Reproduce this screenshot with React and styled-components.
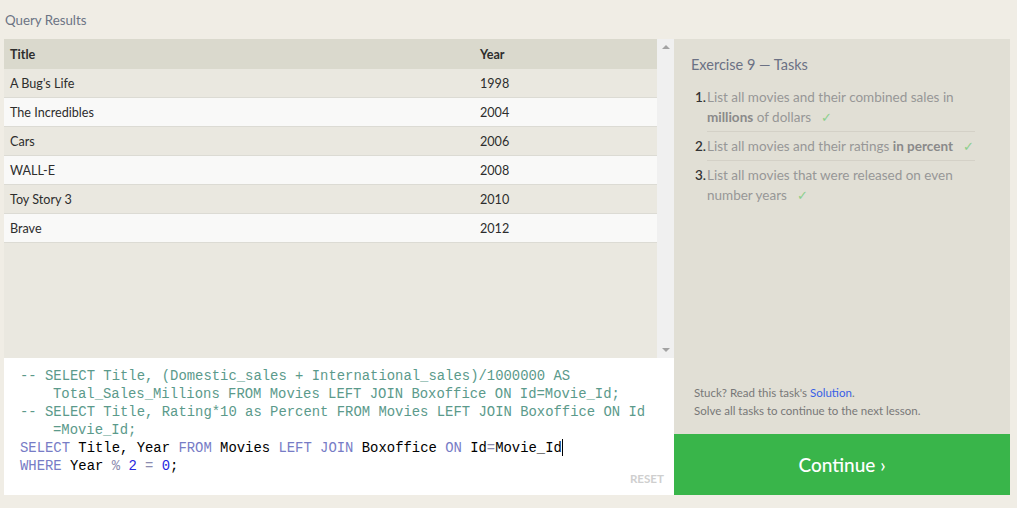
import React from "react";
import styled, { createGlobalStyle } from "styled-components";

const GlobalStyle = createGlobalStyle`
    html, body {
        margin: 0;
        padding: 0;
        background: #f0ede5;
    }
    body {
        font-family: Lato, "Open Sans", sans-serif;
        width: 1017px;
        height: 508px;
        overflow: hidden;
    }
`;

const Page = styled.div`
    padding: 0 7px 0 4px;
`;

const Heading = styled.div`
    height: 39px;
    line-height: 40px;
    padding-left: 1px;
    font-size: 13.3px;
    color: #6c7484;
`;

const Main = styled.div`
    display: flex;
    height: 456px;
`;

const LeftPane = styled.div`
    width: 670px;
    display: flex;
    flex-direction: column;
`;

const ResultsArea = styled.div`
    height: 319px;
    flex-shrink: 0;
    display: flex;
    background: #eae8e0;
`;

const Table = styled.div`
    flex: 1;
`;

const Row = styled.div`
    display: grid;
    grid-template-columns: 470px 1fr;
    height: ${(p) => (p.$head ? 30 : 29)}px;
    box-sizing: border-box;
    align-items: center;
    padding-left: 6px;
    font-size: 12.6px;
    color: #2d2d2d;
    font-weight: ${(p) => (p.$head ? 700 : 400)};
    background: ${(p) => (p.$head ? "#dad9cd" : p.$even ? "#f9f9f8" : "#eae8e0")};
    border-bottom: ${(p) => (p.$head ? "none" : "1px solid #dcdbd4")};
`;

const Scrollbar = styled.div`
    width: 17px;
    background: #f0f0f0;
    display: flex;
    flex-direction: column;
    justify-content: space-between;
    align-items: center;
    padding: 6px 0;
    box-sizing: border-box;
`;

const Arrow = styled.div`
    width: 0;
    height: 0;
    border-left: 4px solid transparent;
    border-right: 4px solid transparent;
    ${(p) => (p.$down ? "border-top: 4px solid #a3a3a3;" : "border-bottom: 4px solid #a3a3a3;")}
`;

const Editor = styled.div`
    height: 137px;
    box-sizing: border-box;
    overflow: hidden;
    background: #ffffff;
    display: flex;
    flex-direction: column;
    padding: 9px 10px 0 16px;
`;

const Code = styled.pre`
    margin: 0;
    font-family: "Liberation Mono", "DejaVu Sans Mono", monospace;
    font-size: 13.9px;
    line-height: 18px;
    color: #000;
`;

const Line = styled.div`
    white-space: pre;
    padding-left: ${(p) => (p.$wrap ? 33 : 0)}px;
`;

const Comment = styled.span`
    color: #5b9a8b;
`;

const Kw = styled.span`
    color: #777cc6;
`;

const Op = styled.span`
    color: #8c8cb0;
`;

const Num = styled.span`
    color: #2727e0;
`;

const Cursor = styled.span`
    display: inline-block;
    width: 1px;
    height: 17px;
    background: #000;
    vertical-align: -4px;
`;

const EditorFooter = styled.div`
    display: flex;
    justify-content: flex-end;
    margin-top: -3px;
    line-height: 14px;
`;

const ResetButton = styled.span`
    font-size: 11.6px;
    font-weight: 700;
    color: #cfcfcf;
`;

const RightPane = styled.div`
    width: 336px;
    display: flex;
    flex-direction: column;
`;

const TasksPanel = styled.div`
    flex: 1;
    background: #e1dfd5;
    padding: 16px 35px 0 17px;
    display: flex;
    flex-direction: column;
`;

const TasksTitle = styled.div`
    font-size: 14.5px;
    color: #6b7184;
    line-height: 20px;
    margin-bottom: 8px;
`;

const TaskList = styled.div`
    display: flex;
    flex-direction: column;
`;

const Task = styled.div`
    display: flex;
`;

const TaskNum = styled.div`
    width: 16px;
    text-align: right;
    padding: 4px 1px 0 0;
    box-sizing: border-box;
    font-size: 13.5px;
    line-height: 20px;
    color: #333;
    font-weight: 600;
`;

const TaskBody = styled.div`
    flex: 1;
    padding: 4px 0;
    font-size: 13.5px;
    line-height: 20px;
    color: #979797;
    border-bottom: ${(p) => (p.$last ? "none" : "1px solid #d4d1c7")};
`;

const Strong = styled.b`
    font-weight: 700;
    color: #8a8a8a;
`;

const Check = styled.span`
    display: inline-block;
    line-height: 14px;
    font-size: 13px;
    color: #8ccf8c;
    margin-left: 10px;
`;

const Spacer = styled.div`
    flex: 1;
`;

const Hint = styled.div`
    font-size: 11.5px;
    line-height: 18px;
    color: #787878;
    padding: 0 0 14px 3px;
`;

const SolutionLink = styled.a`
    color: #3860e6;
    text-decoration: none;
`;

const ContinueButton = styled.div`
    height: 61px;
    background: #39b54a;
    color: #ffffff;
    font-size: 19px;
    font-weight: 500;
    display: flex;
    align-items: center;
    justify-content: center;
`;

const movies = [
    ["A Bug's Life", "1998"],
    ["The Incredibles", "2004"],
    ["Cars", "2006"],
    ["WALL-E", "2008"],
    ["Toy Story 3", "2010"],
    ["Brave", "2012"],
];

const App = () => {
    return (
        <Page>
            <GlobalStyle />
            <Heading>Query Results</Heading>
            <Main>
                <LeftPane>
                    <ResultsArea>
                        <Table>
                            <Row $head>
                                <span>Title</span>
                                <span>Year</span>
                            </Row>
                            {movies.map(([title, year], i) => (
                                <Row key={title} $even={i % 2 === 1}>
                                    <span>{title}</span>
                                    <span>{year}</span>
                                </Row>
                            ))}
                        </Table>
                        <Scrollbar>
                            <Arrow />
                            <Arrow $down />
                        </Scrollbar>
                    </ResultsArea>
                    <Editor>
                        <Code>
                            <Line><Comment>-- SELECT Title, (Domestic_sales + International_sales)/1000000 AS</Comment></Line>
                            <Line $wrap><Comment>Total_Sales_Millions FROM Movies LEFT JOIN Boxoffice ON Id=Movie_Id;</Comment></Line>
                            <Line><Comment>-- SELECT Title, Rating*10 as Percent FROM Movies LEFT JOIN Boxoffice ON Id</Comment></Line>
                            <Line $wrap><Comment>=Movie_Id;</Comment></Line>
                            <Line>
                                <Kw>SELECT</Kw> Title, Year <Kw>FROM</Kw> Movies <Kw>LEFT JOIN</Kw> Boxoffice <Kw>ON</Kw> Id<Op>=</Op>Movie_Id<Cursor />
                            </Line>
                            <Line>
                                <Kw>WHERE</Kw> Year <Op>%</Op> <Num>2</Num> <Op>=</Op> <Num>0</Num>;
                            </Line>
                        </Code>
                        <EditorFooter>
                            <ResetButton>RESET</ResetButton>
                        </EditorFooter>
                    </Editor>
                </LeftPane>
                <RightPane>
                    <TasksPanel>
                        <TasksTitle>Exercise 9 — Tasks</TasksTitle>
                        <TaskList>
                            <Task>
                                <TaskNum>1.</TaskNum>
                                <TaskBody>
                                    List all movies and their combined sales in <Strong>millions</Strong> of dollars<Check>✓</Check>
                                </TaskBody>
                            </Task>
                            <Task>
                                <TaskNum>2.</TaskNum>
                                <TaskBody>
                                    List all movies and their ratings <Strong>in percent</Strong><Check>✓</Check>
                                </TaskBody>
                            </Task>
                            <Task>
                                <TaskNum>3.</TaskNum>
                                <TaskBody $last>
                                    List all movies that were released on even number years<Check>✓</Check>
                                </TaskBody>
                            </Task>
                        </TaskList>
                        <Spacer />
                        <Hint>
                            Stuck? Read this task's <SolutionLink href="#">Solution</SolutionLink>.
                            <br />
                            Solve all tasks to continue to the next lesson.
                        </Hint>
                    </TasksPanel>
                    <ContinueButton>Continue ›</ContinueButton>
                </RightPane>
            </Main>
        </Page>
    );
};

export default App;
